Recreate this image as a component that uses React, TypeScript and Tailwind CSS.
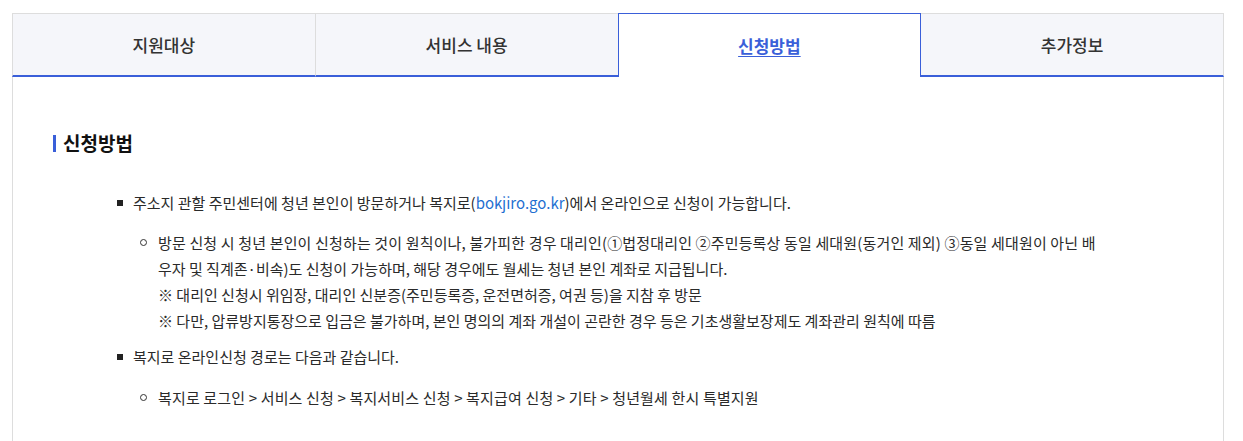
import React from "react";

const tabs = ["지원대상", "서비스 내용", "신청방법", "추가정보"];
const active = 2;

export default function App() {
  return (
    <div
      className="bg-white w-[1243px] h-[441px] overflow-hidden pt-[13px] pl-[12px]"
      style={{ fontFamily: '"Noto Sans CJK KR", "Noto Sans", sans-serif' }}
    >
      <div className="w-[1212px]">
        <div className="flex h-[64px]">
          {tabs.map((t, i) =>
            i === active ? (
              <div
                key={t}
                className="flex-1 flex items-center justify-center bg-white border-t border-l border-r border-[#3a5fd9] text-[17px] font-bold text-[#3a5fd9] underline underline-offset-[3px]"
              >
                {t}
              </div>
            ) : (
              <div
                key={t}
                className={`flex-1 flex items-center justify-center bg-[#f5f6fa] border-t border-[#dddddd] border-b-2 border-b-[#3a5fd9] text-[17px] font-medium text-[#333333] ${
                  i === 0 ? "border-l" : ""
                } ${i === tabs.length - 1 ? "border-r" : ""} ${
                  i === 1 ? "border-l" : ""
                }`}
              >
                {t}
              </div>
            )
          )}
        </div>
        <div className="border-l border-r border-[#dddddd] h-[400px] pl-[40px] pt-[52px] text-[#2a2a2a]">
          <h3 className="flex items-center h-[28px] text-[19px] font-bold text-[#111111] leading-[28px]">
            <span className="inline-block w-[3px] h-[17px] bg-[#3a5fd9] mr-[7px]"></span>
            신청방법
          </h3>
          <ul className="mt-[33px] pl-[62px] text-[15px] leading-[26px]">
            <li className="relative pl-[18px]">
              <span className="absolute left-[2px] top-[10px] w-[6px] h-[6px] bg-[#222222]"></span>
              주소지 관할 주민센터에 청년 본인이 방문하거나 복지로(
              <span className="text-[#1f6fd1]">bokjiro.go.kr</span>)에서 온라인으로 신청이 가능합니다.
              <ul className="mt-[14px] pl-[7px]">
                <li className="relative pl-[18px] whitespace-nowrap">
                  <span className="absolute left-[0px] top-[9px] w-[7px] h-[7px] rounded-full border border-[#333333]"></span>
                  <span className="tracking-[0.15px]">
                    방문 신청 시 청년 본인이 신청하는 것이 원칙이나, 불가피한 경우 대리인(①법정대리인 ②주민등록상 동일 세대원(동거인 제외) ③동일 세대원이 아닌 배
                  </span>
                  <br />
                  우자 및 직계존·비속)도 신청이 가능하며, 해당 경우에도 월세는 청년 본인 계좌로 지급됩니다.
                  <br />
                  ※ 대리인 신청시 위임장, 대리인 신분증(주민등록증, 운전면허증, 여권 등)을 지참 후 방문
                  <br />
                  ※ 다만, 압류방지통장으로 입금은 불가하며, 본인 명의의 계좌 개설이 곤란한 경우 등은 기초생활보장제도 계좌관리 원칙에 따름
                </li>
              </ul>
            </li>
            <li className="relative pl-[18px] mt-[10px]">
              <span className="absolute left-[2px] top-[10px] w-[6px] h-[6px] bg-[#222222]"></span>
              복지로 온라인신청 경로는 다음과 같습니다.
              <ul className="mt-[15px] pl-[7px]">
                <li className="relative pl-[18px] whitespace-nowrap tracking-[0.15px]">
                  <span className="absolute left-[0px] top-[9px] w-[7px] h-[7px] rounded-full border border-[#333333]"></span>
                  복지로 로그인 &gt; 서비스 신청 &gt; 복지서비스 신청 &gt; 복지급여 신청 &gt; 기타 &gt; 청년월세 한시 특별지원
                </li>
              </ul>
            </li>
          </ul>
        </div>
      </div>
    </div>
  );
}
